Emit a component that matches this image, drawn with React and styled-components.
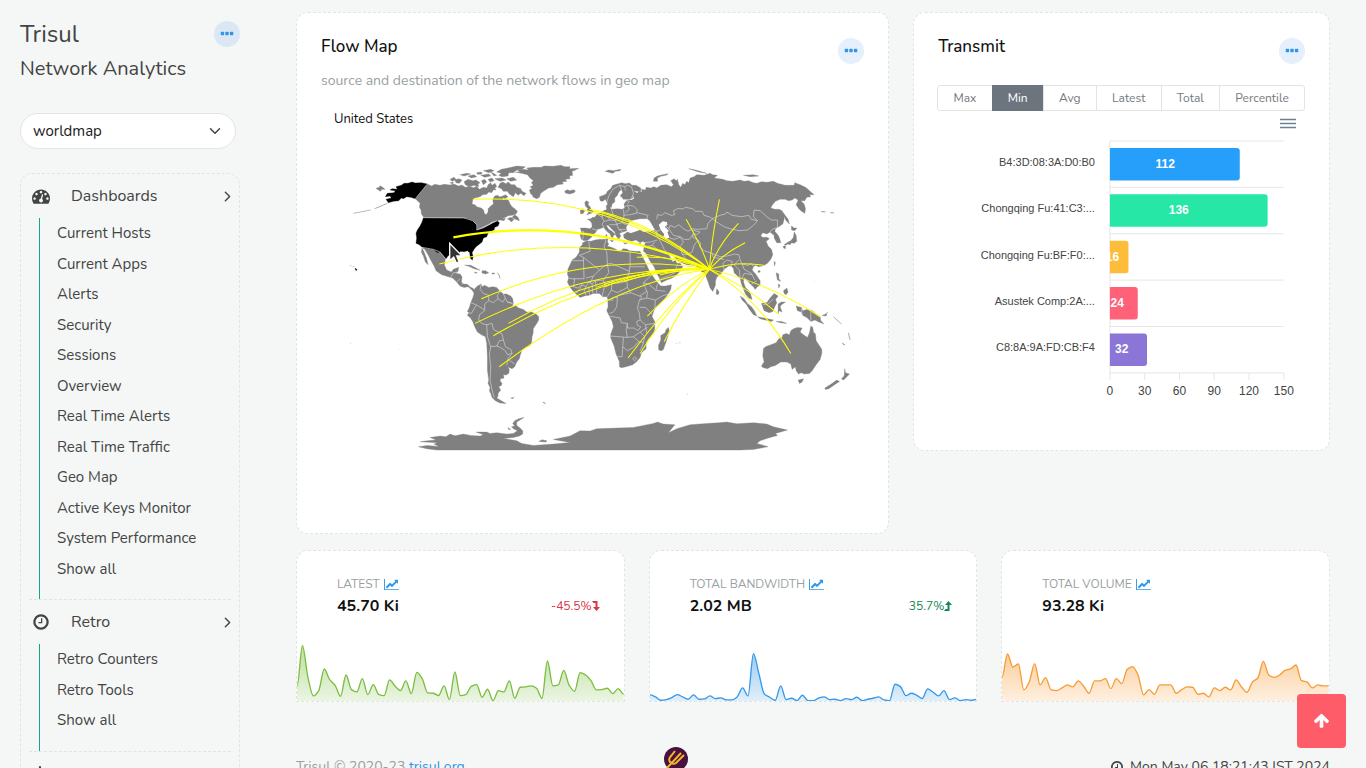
import React from 'react';
import styled, {createGlobalStyle} from "styled-components";
import {FaBell} from "react-icons/fa";
import {FiChevronDown, FiChevronRight} from "react-icons/fi";

const GlobalStyle = createGlobalStyle`
  * {
    box-sizing: border-box;
  }
  body {
    margin: 0;
    background: #f4f7f6;
    color: #444;
    font-family: Nunito, Lato, "Open Sans", sans-serif;
    font-size: 15px;
    line-height: 1.5;
  }
  button, select {
    font-family: inherit;
  }
  a {
    text-decoration: none;
  }
`

const Page = styled.div`
  display: flex;
  gap: 56px;
  height: 100vh;
  overflow: hidden;
  padding: 0 36px 0 20px;
`

const Sidebar = styled.aside`
  flex: 0 0 220px;
  padding-top: 14px;
`

const Main = styled.main`
  flex: 1;
  min-width: 0;
  padding-top: 12px;
`

const Brand = styled.div`
  display: flex;
  justify-content: space-between;
  align-items: center;
  height: 40px;
`

const BrandName = styled.h1`
  margin: 0;
  font-size: 24px;
  font-weight: 400;
`

const BrandSub = styled.h2`
  margin: 0;
  font-size: 20px;
  font-weight: 400;
  line-height: 30px;
`

const RoundButton = styled.button`
  display: flex;
  align-items: center;
  justify-content: center;
  flex: 0 0 auto;
  width: 26px;
  height: 26px;
  padding: 0;
  border: 0;
  border-radius: 50%;
  background: ${props => props.$background || "#e5f0fc"};
  color: #2f96ea;
`

const SelectWrap = styled.label`
  display: block;
  position: relative;
  width: 216px;
  margin: 29px 0 24px;
  svg {
    position: absolute;
    right: 12px;
    top: 9px;
    pointer-events: none;
  }
`

const Select = styled.select`
  width: 100%;
  height: 36px;
  padding: 0 12px;
  border: 1px solid #e4e4e1;
  border-radius: 18px;
  background: #fff;
  color: #1b1b1b;
  font-size: 15px;
  appearance: none;
`

const Menu = styled.nav`
  border: 1px dashed #e3e3e0;
  border-radius: 12px;
  padding: 0 8px;
`

const MenuGroup = styled.section`
  border-bottom: 1px dashed #e3e3e0;
`

const MenuHeader = styled.a`
  display: flex;
  align-items: center;
  height: 44px;
  margin-right: -5px;
  color: #444;
  font-size: 16px;
  padding-left: 3px;
`

const MenuTitle = styled.span`
  flex: 1;
  padding-left: 21px;
`

const MenuList = styled.ul`
  margin: 0 0 0 10px;
  padding: 0 0 15px 17px;
  border-left: 1px solid #17a589;
  list-style: none;
`

const MenuItem = styled.li`
  padding: 4px 0;
  a {
    color: #444;
  }
`

const TopRow = styled.div`
  display: grid;
  grid-template-columns: repeat(12, minmax(0, 1fr));
  align-items: start;
  column-gap: 24px;
`

const StatRow = styled.div`
  display: grid;
  grid-template-columns: repeat(3, minmax(0, 1fr));
  column-gap: 24px;
  margin-top: 16px;
`

const Card = styled.section`
  grid-column: span ${props => props.$span || 1};
  border: 1px dashed #e3e3e0;
  border-radius: 12px;
  background: #fff;
  min-height: ${props => props.$minHeight || "0"};
  padding: 24px;
`

const CardHeader = styled.div`
  display: flex;
  justify-content: space-between;
  align-items: flex-start;
  height: 30px;
  button {
    margin-top: 1px;
  }
`

const CardTitle = styled.h3`
  margin: 0;
  color: #111;
  font-size: 17px;
  font-weight: 500;
  line-height: 20px;
`

const Subtitle = styled.p`
  margin: 4px 0 0;
  color: #999fa2;
  font-size: 14px;
  line-height: 20px;
`

const Country = styled.div`
  padding-left: 13px;
  margin-top: 18px;
  color: #111;
  font-size: 13px;
  line-height: 21px;
`

const Drawing = styled.svg`
  display: block;
  width: 100%;
`

const Tabs = styled.div`
  display: flex;
  margin-top: 18px;
`

const Tab = styled.button`
  flex: 1 1 auto;
  height: 26px;
  margin-left: -1px;
  padding: 0 14px;
  border: 1px solid ${props => props.$active ? "#6c757d" : "#e3e3e0"};
  background: ${props => props.$active ? "#6c757d" : "#fff"};
  color: ${props => props.$active ? "#fff" : "#75797d"};
  font-size: 12px;
  &:first-child {
    border-radius: 3px 0 0 3px;
  }
  &:last-child {
    border-radius: 0 3px 3px 0;
  }
`

const ChartTools = styled.div`
  display: flex;
  justify-content: flex-end;
  height: 23px;
  padding: 7px 9px 0 0;
`

const PlainButton = styled.button`
  display: block;
  height: 12px;
  padding: 0;
  border: 0;
  background: none;
  svg {
    display: block;
  }
`

const StatCard = styled.section`
  border: 1px dashed #e3e3e0;
  border-radius: 12px 12px 0 0;
  background: #fff;
  height: 152px;
  padding-top: 22px;
  display: flex;
  flex-direction: column;
  justify-content: space-between;
`

const StatText = styled.div`
  padding: 0 24px 0 40px;
  line-height: 22px;
`

const StatLabel = styled.div`
  display: flex;
  align-items: center;
  gap: 4px;
  color: #999fa2;
  font-size: 12px;
`

const StatLine = styled.div`
  display: flex;
  justify-content: space-between;
  color: #111;
  font-size: 16px;
`

const Change = styled.span`
  display: flex;
  align-items: center;
  color: ${props => props.$down ? "#dc3545" : "#198754"};
  font-size: 12px;
`

const Footer = styled.footer`
  display: grid;
  grid-template-columns: repeat(3, minmax(0, 1fr));
  column-gap: 24px;
  margin-top: 45px;
  color: #999fa2;
  font-size: 14px;
  line-height: 40px;
  a {
    color: #2f96ea;
  }
`

const FooterLogo = styled.div`
  padding-left: 15px;
`

const Clock = styled.div`
  display: flex;
  align-items: center;
  justify-content: flex-end;
  gap: 6px;
  color: #444;
`

const ToTop = styled.button`
  position: fixed;
  right: 20px;
  bottom: 20px;
  width: 49px;
  height: 54px;
  padding: 4px 0 0;
  border: 0;
  border-radius: 4px;
  background: #ff5c69;
  color: #fff;
`

const DOT = "h192q40 0 68 28t28 68v192q0 40-28 68t-68 28h-192q-40 0-68-28t-28-68v-192q0-40 28-68t68-28z";

const DotsIcon = () => (
  <svg width="14" height="16" viewBox="192 0 1408 1792" fill="currentColor" aria-hidden="true">
    <path d={`M288 640${DOT}M800 640${DOT}M1312 640${DOT}`}/>
  </svg>
);

const ClockIcon = ({size}) => (
  <svg width={size} height={size} viewBox="0 0 1792 1792" fill="currentColor" aria-hidden="true">
    <path d="M1024 544v448q0 14-9 23t-23 9h-320q-14 0-23-9t-9-23v-64q0-14 9-23t23-9h224v-352q0-14 9-23t23-9h64q14 0 23 9t9 23zm416 352q0-148-73-273t-198-198-273-73-273 73-198 198-73 273 73 273 198 198 273 73 273-73 198-198 73-273zm224 0q0 209-103 385.500t-279.500 279.500-385.500 103-385.500-103-279.500-279.500-103-385.500 103-385.500 279.500-279.500 385.500-103 385.500 103 279.500 279.500 103 385.500z"/>
  </svg>
);

const HOLE = "q0-53-37.500-90.500t-90.500-37.500-90.500 37.500-37.500 90.500 37.500 90.500 90.500 37.500 90.500-37.500 37.500-90.500z";

const GaugeIcon = () => (
  <svg width="18" height="18" viewBox="0 0 1792 1792" fill="currentColor" fillRule="evenodd" aria-hidden="true">
    <path d={`M384 1152${HOLE}m192-448${HOLE}m428 481l101-382q6-26-7.500-48.500t-38.500-29.500-48 6.500-30 39.500l-101 382q-60 5-107 43.500t-63 98.500q-20 77 20 146t117 89 146-20 89-117q16-60-6-117t-72-91zm660-33${HOLE}m-640-640${HOLE}m448 192${HOLE}m320 448q0 261-141 483-19 29-54 29h-1402q-35 0-54-29-141-221-141-483 0-182 71-348t191-286 286-191 348-71 348 71 286 191 191 286 71 348z`}/>
  </svg>
);

const LineChartIcon = () => (
  <svg width="15" height="13" viewBox="0 0 2048 1792" fill="#2f96ea" aria-hidden="true">
    <path d="M2048 1536v128h-2048v-1536h128v1408h1920zm-128-1248v435q0 21-19.500 29.500t-35.500-7.500l-121-121-633 633q-10 10-23 10t-23-10l-233-233-416 416-192-192 585-585q10-10 23-10t23 10l233 233 464-464-121-121q-16-16-7.500-35.500t29.500-19.500h435q14 0 23 9t9 23z"/>
  </svg>
);

const ArrowUpIcon = () => (
  <svg width="17" height="17" viewBox="0 0 1792 1792" fill="currentColor" aria-hidden="true">
    <path d="M1675 971q0 51-37 90l-75 75q-38 38-91 38-54 0-90-38l-294-293v704q0 52-37.500 84.500t-90.500 32.500h-128q-53 0-90.500-32.500t-37.500-84.500v-704l-294 293q-36 38-90 38t-90-38l-75-75q-38-38-38-90 0-53 38-91l651-651q35-37 90-37 54 0 91 37l651 651q37 39 37 91z"/>
  </svg>
);

const LevelIcon = ({down}) => (
  <svg width="8" height="10" viewBox="0 0 8 10" fill="currentColor" aria-hidden="true">
    <path d={down ? "M0 0H5.500V6H8L4.500 10L1 6H3.500V2H1.500Z" : "M0 10H5.500V4H8L4.500 0L1 4H3.500V8H1.500Z"}/>
  </svg>
);

const menu = [
  {
    title: "Dashboards",
    icon: <GaugeIcon/>,
    items: ["Current Hosts", "Current Apps", "Alerts", "Security", "Sessions", "Overview", "Real Time Alerts",
      "Real Time Traffic", "Geo Map", "Active Keys Monitor", "System Performance", "Show all"],
  },
  {
    title: "Retro",
    icon: <ClockIcon size={18}/>,
    items: ["Retro Counters", "Retro Tools", "Show all"],
  },
  {title: "", icon: <FaBell size={16}/>, items: []},
];

const hosts = [
  {name: "B4:3D:08:3A:D0:B0", value: 112, color: "#269ffb"},
  {name: "Chongqing Fu:41:C3:...", value: 136, color: "#26e7a6"},
  {name: "Chongqing Fu:BF:F0:...", value: 16, color: "#febc3b"},
  {name: "Asustek Comp:2A:...", value: 24, color: "#ff6178"},
  {name: "C8:8A:9A:FD:CB:F4", value: 32, color: "#8b75d7"},
];

const stats = [
  {
    id: "latest", label: "LATEST", value: "45.70 Ki", change: "-45.5%", down: true, color: "#7bbd3f",
    data: [45, 167, 72, 16, 32, 97, 65, 48, 15, 79, 35, 28, 68, 20, 50, 21, 17, 64, 46, 32, 61, 23, 87, 68, 25, 24,
      17, 46, 5, 88, 17, 20, 45, 50, 12, 36, 2, 32, 28, 61, 9, 42, 43, 46, 39, 9, 121, 46, 49, 93, 48, 30, 86, 79,
      62, 34, 35, 39, 23, 38, 21],
  },
  {
    id: "bandwidth", label: "TOTAL BANDWIDTH", value: "2.02 MB", change: "35.7%", color: "#3598e8",
    data: [19, 13, 3, 5, 11, 20, 13, 6, 19, 6, 7, 16, 8, 10, 4, 4, 13, 40, 16, 143, 83, 22, 12, 3, 46, 5, 9, 2, 18, 2,
      2, 10, 13, 5, 6, 2, 8, 5, 12, 2, 6, 9, 13, 4, 2, 51, 44, 17, 24, 18, 8, 37, 27, 16, 32, 5, 10, 2, 5, 3, 6],
  },
  {
    id: "volume", label: "TOTAL VOLUME", value: "93.28 Ki", color: "#f79c34",
    data: [72, 142, 103, 112, 34, 58, 113, 49, 71, 35, 32, 40, 49, 43, 61, 45, 24, 61, 61, 68, 38, 68, 53, 96, 104,
      78, 19, 35, 21, 49, 49, 49, 24, 35, 43, 42, 21, 24, 13, 40, 32, 42, 34, 64, 43, 27, 58, 70, 120, 79, 72, 79,
      93, 97, 109, 62, 58, 40, 49, 46, 46],
  },
];

// monotone cubic through evenly spaced values
function smoothLine(data, width, height) {
  const step = width / (data.length - 1);
  const y = data.map(v => height - v);
  const slope = y.map((v, i) => {
    if (i === 0 || i === y.length - 1) return 0;
    const a = v - y[i - 1];
    const b = y[i + 1] - v;
    return a * b <= 0 ? 0 : 2 * a * b / (a + b);
  });
  return y.slice(1).reduce((d, v, i) => (
    `${d}C${(i + 1 / 3) * step} ${y[i] + slope[i] / 3} ${(i + 2 / 3) * step} ${v - slope[i + 1] / 3} ${(i + 1) * step} ${v}`
  ), `M0 ${y[0]}`);
}

function Sparkline({id, data, color}) {
  const line = smoothLine(data, 981, 172);
  return (
    <Drawing viewBox="0 0 981 172" role="img" aria-label={id}>
      <defs>
        <linearGradient id={id} x1="0" y1="0" x2="0" y2="1">
          <stop offset="0" stopColor={color} stopOpacity="0.5"/>
          <stop offset="1" stopColor={color} stopOpacity="0.15"/>
        </linearGradient>
      </defs>
      <path d={`${line}V172H0Z`} fill={`url(#${id})`}/>
      <path d={line} fill="none" stroke={color} strokeWidth="4"/>
    </Drawing>
  );
}

function HostChart() {
  const left = 172;
  const unit = 174 / 150;
  const row = 46.4;
  return (
    <Drawing viewBox="0 0 367 270" fontFamily="Liberation Sans, Arial, sans-serif">
      <g stroke="#e6e6e6">
        {[0, 1, 2, 3, 4, 5].map(i => <path key={i} d={`M${left} ${7 + row * i}H346`}/>)}
        {[0, 30, 60, 90, 120, 150].map(v => <path key={v} d={`M${left + v * unit} 239v7`}/>)}
        <path d={`M${left} 7V239`}/>
      </g>
      {hosts.map((host, i) => {
        const y = 14 + row * i;
        const w = host.value * unit;
        return (
          <g key={host.name}>
            <path d={`M${left} ${y}h${w - 3}q3 0 3 3v26.500q0 3-3 3h${3 - w}z`} fill={host.color}/>
            <text x="157" y={y + 18} textAnchor="end" fontSize="11" fill="#444">{host.name}</text>
            <text x={left + w / 2} y={y + 20} textAnchor="end" fontSize="12" fontWeight="700" fill="#fff">{host.value}</text>
          </g>
        );
      })}
      {[0, 30, 60, 90, 120, 150].map(v => (
        <text key={v} x={left + v * unit} y="261" textAnchor="middle" fontSize="12" fill="#444">{v}</text>
      ))}
    </Drawing>
  );
}

// all flows end at the same host in India
const flows = [
  "M398 148Q800 130", "M298 342Q700 235", "M424 446Q760 300", "M405 520Q760 345", "M505 520Q800 350",
  "M460 557Q800 360", "M478 650Q820 395", "M795 410Q940 345", "M770 412Q930 350", "M890 322Q1000 315",
  "M748 178Q930 210", "M922 498Q1010 405", "M864 624Q1000 440", "M900 610Q1000 450", "M972 575Q1030 460",
  "M1038 208Q1090 300", "M1138 148Q1115 260", "M1195 220Q1130 290", "M1215 278Q1150 310", "M1272 346Q1190 332",
  "M1440 500Q1290 400", "M1314 492Q1220 410", "M1352 610Q1250 440", "M1000 325Q1050 335", "M960 375Q1030 355",
  "M850 395Q980 350",
];

function WorldMap() {
  return (
    <Drawing viewBox="-57 -60 1629 1050" role="img" aria-label="Network flows on a world map">
      <g fill="#808080" stroke="#808080" strokeWidth="1" strokeLinejoin="round">
        {/* North America */}
        <path d="M262 102L275 108 284 103 300 106 312 103 330 105 342 102 355 108 366 105 375 112 388 109 400 113 410 109 418 118 430 112 440 114 444 104 452 98 456 106 465 100 470 110 464 114 468 120 460 119 455 128 446 126 440 133 428 134 420 140 404 144 398 150 396 162 404 164 412 171 424 174 431 181 433 190 438 194 444 186 444 176 452 168 460 162 458 148 464 138 472 136 480 141 486 139 490 151 500 147 506 152 510 162 516 170 524 176 532 184 528 192 516 196 504 197 498 201 484 206 496 205 492 212 480 210 470 212 455 216 445 224 430 232 420 236 410 240 411 225 398 212 385 208 370 204 252 203 244 192 243 180 238 172 240 160 232 152 226 146Z"/>
        <path d="M502 206L512 202 522 208 514 216 508 210ZM516 202L524 194 534 202 538 212 526 208Z"/>
        <path d="M480 100L488 96 498 101 504 96 514 104 524 104 530 112 542 116 546 124 558 130 552 137 542 130 534 136 526 128 520 140 508 132 502 124 490 124 484 116 474 112ZM484 140L496 134 504 140 494 146ZM372 95L384 88 398 92 408 90 420 98 414 102 416 110 402 106 388 110 376 104ZM344 90L356 86 366 90 358 100 348 98ZM424 92L434 88 440 96 430 104ZM444 88L456 84 462 92 450 96ZM464 86L486 84 498 90 480 94ZM422 76L446 72 452 78 434 82ZM470 66L484 58 504 54 530 48 556 50 546 58 530 60 520 68 506 68 504 78 486 80 476 76 484 70ZM384 78L402 74 410 80 394 84ZM330 88L342 82 348 88 336 94ZM360 74L380 70 392 72 372 78ZM430 62L452 58 462 62 446 68ZM410 68L424 66 426 72 412 73ZM500 86L520 82 530 90 512 94ZM470 76L460 70 452 66 462 78ZM330 98L340 96 338 102Z"/>
        <path d="M246 292L262 296 280 298 292 308 300 306 310 316 316 326 313 345 320 360 334 366 340 358 356 352 354 364 346 370 360 372 366 380 364 396 370 402 382 403 392 412 400 416 396 420 384 410 372 412 360 408 350 396 338 384 325 380 305 374 288 362 282 348 272 330 264 314 254 298ZM246 294L252 306 260 326 264 344 256 336 250 318 244 306Z"/>
        <path d="M374 345L392 346 408 354 420 361 402 356 390 350ZM426 362L436 362 446 368 436 372 426 369ZM403 366L412 368 406 370ZM456 369H463V372H456Z"/>
        <path d="M525 66L540 66 532 61 548 58 566 60 560 54 582 52 604 52 612 48 640 49 662 46 674 50 690 50 688 56 716 55 706 60 696 64 698 76 688 78 690 86 676 88 680 94 666 96 670 102 652 104 640 112 626 114 610 124 602 130 598 142 590 146 580 142 576 134 572 132 568 120 576 116 570 110 580 106 574 98 580 92 570 84 562 74 544 70ZM674 123L682 119 690 122 700 119 706 123 702 128 688 132 676 129Z"/>
        <path d="M108 115L118 112 120 107 128 112 135 118 126 118 121 124 114 119ZM472 368L478 376 480 386 477 376Z"/>
        {/* South America */}
        <path d="M392 412L402 418 412 408 424 402 426 410 434 406 446 412 458 410 470 412 478 422 490 432 500 432 512 438 518 446 520 460 516 470 526 466 536 474 550 478 560 486 574 486 588 492 596 500 596 510 590 520 580 535 579 550 576 560 575 576 570 586 556 592 546 600 541 614 538 626 530 636 524 650 516 656 504 651 508 660 506 670 498 675 490 674 492 684 482 686 480 692 486 700 484 706 476 710 482 720 474 730 474 738 470 744 484 752 498 760 480 759 466 752 456 742 452 730 448 722 450 712 444 700 446 690 442 660 442 620 440 580 436 560 424 554 412 546 404 530 398 514 390 502 382 496 386 488 382 484 388 472 392 458 398 444 402 430Z"/>
        {/* Antarctica */}
        <path d="M235 890L262 886 296 889 282 882 292 878 240 875 262 872 288 870 270 862 300 858 318 860 330 852 345 857 370 852 392 856 420 858 430 854 408 846 440 846 450 850 470 848 500 852 520 850 532 842 520 836 514 830 524 828 518 820 524 812 536 806 552 802 540 810 530 816 530 826 540 834 548 842 548 852 538 858 520 862 490 865 530 872 545 880 580 886 640 882 690 877 640 868 690 858 720 842 750 843 770 836 830 834 880 832 910 826 940 820 952 816 970 822 1004 824 985 848 1010 836 1050 824 1100 820 1136 818 1160 816 1190 821 1240 818 1280 822 1300 830 1342 840 1306 850 1312 856 1290 862 1260 872 1250 880 1284 890 1240 898 1200 900 290 900 260 896Z"/>
        <path d="M596 874L606 869 620 872 618 876ZM512 744L522 742 518 746ZM608 756L616 760 611 759ZM504 832L512 838 506 838Z"/>
      </g>
      <g transform="translate(600)" fill="#808080" stroke="#808080" strokeWidth="1" strokeLinejoin="round">
        {/* Africa */}
        <path d="M128 278L140 272 152 274 165 270 180 268 192 268 204 266 202 276 206 282 202 288 214 292 228 298 235 304 244 302 248 296 260 297 268 302 286 304 300 304 306 318 314 334 322 350 328 364 336 376 346 390 354 400 362 408 376 408 394 404 392 418 384 432 378 440 365 455 352 468 344 476 340 486 336 500 344 514 344 534 342 548 325 566 318 578 318 596 304 608 300 622 290 634 278 644 258 650 244 653 238 650 238 635 228 612 222 588 212 564 212 552 220 530 216 514 206 494 200 482 204 470 203 446 200 440 188 440 178 430 160 430 145 436 138 436 120 442 108 432 96 420 88 408 82 396 86 384 82 372 84 356 92 340 96 330 108 322 118 306 118 292 126 286Z"/>
        <path d="M385 532L388 544 378 575 370 598 364 602 356 600 355 586 362 570 362 556 375 548 378 538Z"/>
        {/* Eurasia */}
        <path d="M124 268L120 256 124 246 121 234 136 234 150 236 156 230 155 220 150 212 142 208 152 206 158 202 164 202 172 192 182 188 190 182 196 180 200 178 198 168 206 160 210 166 208 174 216 178 232 176 246 178 254 174 252 162 258 154 264 150 274 150 282 146 280 138 270 136 262 128 276 120 292 130 296 122 306 126 304 118 316 120 318 112 332 114 342 110 350 114 362 106 380 104 394 110 400 104 392 92 402 86 408 92 412 88 416 104 422 112 428 100 434 104 440 94 446 98 450 84 462 80 470 74 492 76 510 70 518 74 532 76 522 84 548 88 560 92 578 94 600 90 612 94 625 92 640 98 650 100 664 95 680 97 700 94 712 100 735 106 762 106 764 98 780 104 796 112 806 120 812 126 822 134 808 134 812 140 800 142 794 152 782 152 792 162 796 176 794 190 784 184 776 176 768 164 774 150 764 144 756 150 745 152 736 148 720 148 706 154 696 166 692 174 704 178 716 178 722 180 732 196 732 208 728 222 716 230 706 236 704 244 714 256 718 264 722 278 710 278 702 264 702 256 694 250 690 246 680 252 668 248 662 256 666 262 680 262 688 266 678 274 684 288 694 298 698 314 692 328 682 340 672 346 656 350 646 346 640 350 636 360 648 374 660 392 660 404 652 410 645 418 640 410 632 404 626 396 612 384 610 396 616 412 626 422 632 434 636 448 626 444 616 432 610 416 604 402 600 384 590 376 582 368 580 356 574 348 566 348 552 358 544 370 530 382 526 394 526 406 518 424 510 414 504 396 498 380 495 368 486 366 478 358 474 352 462 346 440 344 425 338 412 332 404 322 396 314 384 312 392 324 398 336 406 330 410 340 420 340 428 350 420 364 410 374 396 384 380 390 364 398 358 384 350 370 342 350 330 334 322 318 316 308 310 304 312 290 316 278 308 274 300 278 288 270 275 274 262 270 252 264 250 254 262 246 272 250 290 244 300 240 310 246 332 244 345 240 330 214 322 206 300 206 270 212 258 232 260 242 248 246 238 250 242 258 236 268 228 258 224 246 214 236 204 226 198 226 206 238 216 244 226 254 220 256 218 268 214 262 210 252 200 244 190 232 180 236 172 238 166 248 156 254 154 262 144 270 132 272Z"/>
        <path d="M180 152L178 140 190 136 198 132 202 124 212 116 218 106 232 102 245 98 256 101 268 99 276 106 288 106 302 114 302 122 290 124 280 122 276 128 278 144 268 148 250 148 244 140 240 138 248 128 244 118 236 126 232 136 224 144 224 156 216 162 214 172 206 174 202 160 196 148 188 154Z"/>
        <path d="M138 152L146 156 144 164 150 170 154 180 160 184 154 190 140 194 146 186 140 180 144 176 136 168 134 158ZM120 182L128 176 134 182 130 190 122 192ZM195 64L206 60 220 62 242 58 240 62 226 64 218 70 206 67ZM194 262L200 252 201 264ZM210 270L220 272 216 276ZM250 278L262 280 254 282ZM294 282L302 280 298 285Z"/>
        <path d="M724 180L732 192 744 208 748 222 738 212 730 196ZM754 228L762 234 770 234 764 242 754 240ZM762 246L768 256 770 274 762 280 754 278 750 284 742 282 738 286 732 284 744 276 752 272 760 262ZM730 288L736 288 736 296 730 294ZM702 334L706 338 703 348ZM654 362H660V367H654ZM530 416L537 426 534 434 528 432ZM708 368L716 372 716 386 722 394 712 390ZM730 422L740 414 744 426 738 434 732 430ZM714 402L720 406 716 414Z"/>
        <path d="M600 438L612 446 622 460 634 470 644 484 650 498 640 494 628 478 618 462 606 450ZM664 460L680 458 690 444 702 430 714 438 706 448 710 458 704 470 698 484 688 488 672 482ZM714 462L724 456 736 456 724 464 720 470 726 486 718 482 714 490ZM652 500L672 504 700 510 694 514 660 506ZM708 514H724L740 520 720 518ZM768 468L784 472 788 482 800 478 816 482 828 492 840 500 842 512 852 522 836 516 824 510 812 514 800 502 788 496 784 486 772 482ZM846 496L860 490 862 486 858 498ZM880 500L904 522 890 510Z"/>
        <path d="M668 652L664 648 672 635 668 618 670 596 676 590 692 584 708 578 716 566 726 562 728 554 738 550 748 554 752 542 760 536 772 532 786 534 780 546 790 554 802 562 808 548 812 528 818 532 820 546 826 552 828 572 836 584 845 598 845 610 840 628 828 644 816 662 808 670 792 672 784 668 775 672 768 662 766 650 756 658 752 642 740 636 722 636 706 646 692 650 682 656ZM774 690L790 686 786 696 778 700ZM914 656L916 668 928 672 918 682 910 690 904 686 912 678ZM890 690L898 694 880 706 866 716 856 718 854 714 870 704ZM906 578L914 584 910 584Z"/>
        <path d="M340 94L342 84 352 78 368 74 384 71 380 75 362 79 352 84 352 94ZM446 56L476 66 500 70 466 60ZM610 76L640 74 656 78 630 80ZM844 184L856 186 846 186ZM870 188L882 188 874 189ZM408 580H412M416 578H422M440 732H444M452 751H453M822 394H824M970 563H971M10 757L16 760M925 548L930 570 927 560Z"/>
      </g>
      {/* USA */}
      <g stroke="#000" strokeWidth="1" strokeLinejoin="round">
        <path d="M250 204L370 205 385 207 398 212 410 225 411 241 430 235 447 226 458 219 472 213 478 218 474 228 464 232 462 240 452 244 444 250 440 260 430 264 426 276 416 284 408 290 402 298 396 308 399 320 397 330 391 325 389 308 382 302 372 305 362 304 358 308 350 304 340 307 330 312 322 320 318 326 308 314 300 306 292 308 280 298 262 296 246 292 238 284 228 280 230 264 228 250 232 240 240 228 246 216Z"/>
        <path d="M262 102L226 146 212 142 200 140 190 146 184 144 176 152 160 154 145 158 138 148 154 144 150 138 136 140 142 130 162 128 166 122 150 120 156 116 172 118 168 110 184 106 192 100 204 100 216 96 226 99 244 98Z"/>
        <path d="M142 160L128 166 104 176M45 355L51 358 48 362Z"/>
      </g>
      <path d="M92 180L40 190M30 347h4M38 350h5M178 598h1M30 580h2" fill="none" stroke="#999" strokeWidth="2"/>
      {/* country borders */}
      <g fill="none" stroke="#d4d4d4" strokeWidth="2" strokeLinejoin="round">
        <path d="M262 102L226 146M252 203H370L398 212 411 225 410 240 445 224 470 212M246 292L280 298 300 306 316 326M332 382L340 368 352 366M350 396L360 386M366 404L370 396"/>
        <path d="M424 402L420 418 430 430 446 436 446 452 434 462 434 482 418 494 416 510 424 520 440 524 456 520 460 538 486 552 490 570 478 572 470 588 452 590 442 560 440 524M452 590L448 612 452 650 450 690 456 720 462 742M446 452L460 458 474 446 472 436 480 424M474 446L488 456 496 444 490 432M496 444L502 456 514 458M502 456L520 462M392 458L408 464 418 470 434 480M384 488L394 490 408 466M490 570L496 590 512 598 516 610 502 614 496 602 480 592 470 588M516 610L504 626 500 646M504 628L524 642"/>
        <g transform="translate(600)">
          <path d="M95 332H130V322L178 360 160 378 138 384M130 330L132 386 100 386M130 322L118 316 150 304 146 274M178 360L202 342 200 306 192 290 198 268M202 342L214 340 268 364V350H314M270 350V304M268 364L260 392 262 412 272 428 298 438 320 424 310 398 336 374M202 342L206 368 190 390 166 392 156 402 146 396 138 410 126 404 114 414 100 410M160 378L150 400M190 390L194 402 216 396 232 400 258 394M166 392L170 430M156 402L158 430M146 410L148 434M138 410L132 424 138 436M126 404L118 418 108 430M86 384L104 388 100 410 88 408M194 402L190 424 186 438M216 396L214 420 202 440M214 420L232 428 262 412M204 450H218V442H232L236 436 254 432 272 428"/>
          <path d="M232 442L230 470 220 486 208 490M206 498L240 504 244 518 262 520 262 534 282 534 294 542 302 530 292 526 290 514 300 510 298 490 292 474 298 450 306 442 298 438M298 450L320 444 322 424M320 444L346 450 366 438 390 430M346 450L344 474M298 472H316L338 494M300 510L316 524 344 520M262 520L258 540 262 562 212 558M262 562L280 560 300 546 322 532M316 524L320 550M280 560L296 574 310 578 314 560 300 546M250 562L248 590 246 620H230M248 590L262 602 280 592 296 574M300 602L306 590 310 578M278 626L284 620 290 626 283 632ZM310 398L326 402 346 420 376 424M348 418L352 402M302 320L312 318"/>
          <path d="M350 208L352 194 366 196 374 188 394 196 404 194 400 182 412 176 430 176 436 172 458 176 466 184 486 184 492 196 512 202 516 206 504 220 500 236 470 238 456 236 444 244 430 236 416 224 404 232 390 226 386 236 376 228M386 236L400 256 420 260 432 268 448 268 460 250 470 254 480 246 456 240M516 206L540 196 556 192 560 186 576 196 604 200 626 196 634 208 652 212 640 226 622 240 596 242 570 236 552 230 530 216 516 206M652 212L640 200 642 180 660 182 680 200 694 210 712 210 712 232 696 238 690 246"/>
          <path d="M460 250L458 262 474 270 482 282 478 290 492 302 516 310 540 320 560 318 584 312 596 314 600 330 606 342 622 346 634 340 640 350M474 270L462 286 456 306 440 314 426 312 420 290 430 276 420 262M426 312L440 330 438 342M384 262L402 268 420 262M346 240L354 254 366 262 374 262M350 256L364 280 372 298 386 314M310 278L330 276 352 270M318 290L336 286 344 276M336 286L360 304 384 312M362 386L384 378 404 368 412 342M552 358L548 340 560 330 576 334 574 348M516 310L520 322 552 328M600 384L598 360 582 344 596 330M606 342L612 358 634 370 644 390M606 386L612 370 636 374M632 404L650 392M784 476L786 496M812 484V512M668 464L684 462 700 446M612 384L622 390"/>
          <path d="M156 236L176 242M124 246L130 244 128 268M172 192L186 202 192 214 186 222 192 234M186 202L190 184M192 214L210 210 226 212 230 224 208 224M210 210L202 200 220 196 214 178M220 196L232 206 250 206 252 196 250 178M226 212L232 206M250 196L270 194 288 190 292 180 280 168 262 166 254 170M250 206L246 218 230 222 236 238 248 246M246 218L262 226M256 188L268 178 262 166M250 206L268 208 272 216M236 238L258 238M320 206L324 196 300 190 290 188M332 240L350 244 360 240M350 244L348 258M200 158L206 138 218 118 238 106 254 110 262 106 274 110M254 110L256 122M238 106L244 118M254 150L268 154 262 162M274 110L280 130 274 146"/>
        </g>
      </g>
      {/* inland seas */}
      <path
        transform="translate(600)"
        fill="#fff"
        d="M260 232L270 218 284 213 292 218 286 224 296 226 304 222 300 214 310 214 318 224 332 230 338 238 328 244 312 244 298 238 282 242 268 242ZM356 224L368 214 380 216 382 224 374 230 386 242 382 248 388 262 378 268 370 262 372 252 362 240Z"
      />
      <g fill="none" stroke="#ff0" strokeWidth="3">
        {flows.map(d => <path key={d} d={`${d} 1108 358`}/>)}
        <path d="M340 262Q720 190 1108 358" strokeWidth="7"/>
        <path d="M760 182Q940 225 1108 358"/>
      </g>
      <path d="M329 280V332L341 321 349 339 357 335 350 318H366Z" fill="#333" stroke="#fff" strokeWidth="4"/>
    </Drawing>
  );
}

function App() {
  return (
    <>
      <GlobalStyle/>
      <Page>
        <Sidebar>
          <Brand>
            <BrandName>Trisul</BrandName>
            <RoundButton type="button" aria-label="More" $background="#dbe8f4"><DotsIcon/></RoundButton>
          </Brand>
          <BrandSub>Network Analytics</BrandSub>
          <SelectWrap>
            <Select aria-label="Dashboard" defaultValue="worldmap">
              <option>worldmap</option>
            </Select>
            <FiChevronDown size={18}/>
          </SelectWrap>
          <Menu>
            {menu.map(group => (
              <MenuGroup key={group.title}>
                <MenuHeader href="#">
                  {group.icon}
                  <MenuTitle>{group.title}</MenuTitle>
                  <FiChevronRight size={17}/>
                </MenuHeader>
                <MenuList>
                  {group.items.map(item => <MenuItem key={item}><a href="#">{item}</a></MenuItem>)}
                </MenuList>
              </MenuGroup>
            ))}
          </Menu>
        </Sidebar>
        <Main>
          <TopRow>
            <Card $span={7} $minHeight="522px">
              <CardHeader>
                <CardTitle>Flow Map</CardTitle>
                <RoundButton type="button" aria-label="More"><DotsIcon/></RoundButton>
              </CardHeader>
              <Subtitle>source and destination of the network flows in geo map</Subtitle>
              <Country>United States</Country>
              <WorldMap/>
            </Card>
            <Card $span={5} $minHeight="439px">
              <CardHeader>
                <CardTitle>Transmit</CardTitle>
                <RoundButton type="button" aria-label="More"><DotsIcon/></RoundButton>
              </CardHeader>
              <Tabs>
                {["Max", "Min", "Avg", "Latest", "Total", "Percentile"].map(name => (
                  <Tab key={name} type="button" $active={name === "Min"}>{name}</Tab>
                ))}
              </Tabs>
              <ChartTools>
                <PlainButton type="button" aria-label="Chart menu">
                  <svg width="16" height="12" viewBox="0 0 16 12" stroke="#6e8192" strokeWidth="1.500">
                    <path d="M0 1.500H16M0 5.500H16M0 9.500H16"/>
                  </svg>
                </PlainButton>
              </ChartTools>
              <HostChart/>
            </Card>
          </TopRow>
          <StatRow>
            {stats.map(stat => (
              <StatCard key={stat.id}>
                <StatText>
                  <StatLabel>{stat.label}<LineChartIcon/></StatLabel>
                  <StatLine>
                    <strong>{stat.value}</strong>
                    {stat.change && <Change $down={stat.down}>{stat.change}<LevelIcon down={stat.down}/></Change>}
                  </StatLine>
                </StatText>
                <Sparkline id={stat.id} data={stat.data} color={stat.color}/>
              </StatCard>
            ))}
          </StatRow>
          <Footer>
            <div>Trisul © 2020-23 <a href="#">trisul.org</a></div>
            <FooterLogo>
              <svg width="24" height="24" viewBox="0 0 24 24" fill="none" role="img" aria-label="Trisul">
                <circle cx="12" cy="12" r="12" fill="#48123f"/>
                <path d="M3 21L17 6M11 4L7 9Q4 12 6 15Q9 18 12 16L20 8" stroke="#f5b62a" strokeWidth="2"/>
              </svg>
            </FooterLogo>
            <Clock><ClockIcon size={14}/>Mon May 06 18:21:43 IST 2024</Clock>
          </Footer>
        </Main>
      </Page>
      <ToTop type="button" aria-label="Back to top"><ArrowUpIcon/></ToTop>
    </>
  );
}

export default App;
